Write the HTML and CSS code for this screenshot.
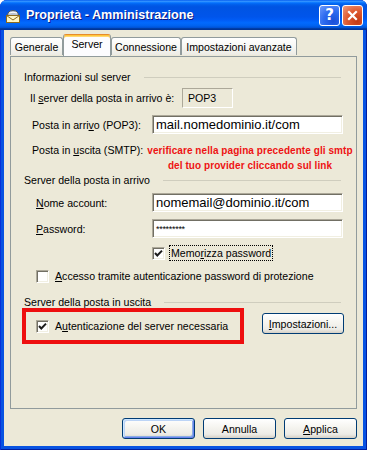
FILE: index.html
```html
<!DOCTYPE html>
<html lang="it">
<head>
<meta charset="utf-8">
<title>Proprietà - Amministrazione</title>
<link rel="stylesheet" href="styles.css">
</head>
<body>
<div class="window">
  <div class="titlebar">
    <svg class="ticon" width="16" height="16" viewBox="0 0 16 16">
      <path d="M2.5 8 Q2.5 2.5 8 2.5 Q13.5 2.5 13.5 8 Z" fill="#B9C2CF" stroke="#4E5866" stroke-width="1"/>
      <path d="M4 5 Q8 3.5 12 5" fill="none" stroke="#fff" stroke-width="1"/>
      <rect x="1.5" y="7.5" width="13" height="7" fill="#FFF6C4" stroke="#8C6B1E"/>
      <path d="M1.5 7.5 L8 12 L14.5 7.5" fill="none" stroke="#8C6B1E"/>
    </svg>
    <span class="title">Proprietà - Amministrazione</span>
    <div class="tbtns">
      <span class="tb help">?</span>
      <span class="tb close"><svg width="13" height="13" viewBox="0 0 13 13"><path d="M3 3 L10 10 M10 3 L3 10" stroke="#fff" stroke-width="2.2" stroke-linecap="square"/></svg></span>
    </div>
  </div>
  <div class="client">
    <div class="tabs">
      <div class="tab t-gen">Generale</div>
      <div class="tab sel t-srv">Server</div>
      <div class="tab t-con">Connessione</div>
      <div class="tab t-imp">Impostazioni avanzate</div>
    </div>
    <div class="panel">
      <div class="group"><span>Informazioni sul server</span><i class="rule"></i></div>
      <div class="row r-type">
        <span class="lbl lbl-type">Il <u>s</u>erver della posta in arrivo è:</span>
        <span class="static">POP3</span>
      </div>
      <div class="row r-in">
        <span class="lbl lbl-8">Posta in arri<u>v</u>o (POP3):</span>
        <div class="edit">mail.nomedominio.it/com</div>
      </div>
      <div class="row r-out">
        <span class="lbl lbl-out">Posta in <u>u</u>scita (SMTP):</span>
        <div class="note">verificare nella pagina precedente gli smtp<br>del tuo provider cliccando sul link</div>
      </div>
      <div class="group"><span>Server della posta in arrivo</span><i class="rule"></i></div>
      <div class="row r-acc">
        <span class="lbl lbl-12"><u>N</u>ome account:</span>
        <div class="edit">nomemail@dominio.it/com</div>
      </div>
      <div class="row r-pwd">
        <span class="lbl lbl-12"><u>P</u>assword:</span>
        <div class="edit pwd">*********</div>
      </div>
      <div class="row r-mem">
        <span class="cb checked"><svg width="11" height="11" viewBox="0 0 11 11"><path d="M2 5 L4.3 7.5 L9 2.6" fill="none" stroke="#1d1d1d" stroke-width="2"/></svg></span>
        <span class="cblbl focus">Memo<u>r</u>izza password</span>
      </div>
      <div class="row r-spa">
        <span class="cb"></span>
        <span class="cblbl"><u>A</u>ccesso tramite autenticazione password di protezione</span>
      </div>
      <div class="group g-out"><span>Server della posta in uscita</span><i class="rule"></i></div>
      <div class="row r-auth">
        <div class="highlight">
          <span class="cb checked"><svg width="11" height="11" viewBox="0 0 11 11"><path d="M2 5 L4.3 7.5 L9 2.6" fill="none" stroke="#1d1d1d" stroke-width="2"/></svg></span>
          <span class="cblbl">A<u>u</u>tenticazione del server necessaria</span>
        </div>
        <button class="btn btn-set"><u>I</u>mpostazioni...</button>
      </div>
    </div>
    <div class="buttons">
      <button class="btn default">OK</button>
      <button class="btn">Annulla</button>
      <button class="btn"><u>A</u>pplica</button>
    </div>
  </div>
</div>
</body>
</html>
```

FILE: styles.css
```css
* { box-sizing: border-box; }
body {
  margin: 0;
  font-family: "Liberation Sans", Arial, sans-serif;
  font-size: 10.6px;
  color: #000;
  background: #fff;
}
u { text-decoration: underline; text-underline-offset: 1px; }

.window {
  width: 367px;
  height: 450px;
  display: flex;
  flex-direction: column;
  background: #0853E2;
  box-shadow: inset 1px 0 0 #0831D9, inset -1px 0 0 #001EA0, inset 0 -1px 0 #001EA0;
  border-radius: 7px 7px 0 0;
  overflow: hidden;
}

.titlebar {
  height: 30px;
  flex: none;
  display: flex;
  align-items: center;
  padding: 0 4px 0 5px;
  background: linear-gradient(to bottom, #0058EE 0%, #3593FF 4%, #288EFF 6%, #127DFF 8%, #036FFC 10%, #0262EE 14%, #0057E5 20%, #0054E3 24%, #0055EB 56%, #005BF5 66%, #026AFE 76%, #0062EF 86%, #0052D6 92%, #0040AB 94%, #003092 100%);
}
.ticon { flex: none; margin-right: 5px; margin-top: 1px; }
.title {
  flex: 1;
  color: #fff;
  font-weight: bold;
  font-size: 12.6px;
  text-shadow: 1px 1px 0 #0A1883;
}
.tbtns { display: flex; gap: 2px; }
.tb {
  width: 21px;
  height: 21px;
  border: 1px solid #fff;
  border-radius: 3px;
  display: flex;
  align-items: center;
  justify-content: center;
  color: #fff;
}
.help {
  background: radial-gradient(circle at 70% 80%, #1A4FD8 0%, #2D6CF0 50%, #6E9BFB 100%);
  font-family: "DejaVu Sans", sans-serif;
  font-weight: bold;
  font-size: 15px;
}
.close {
  background: radial-gradient(circle at 75% 80%, #C23A14 0%, #DF5A30 50%, #EE9C80 100%);
}

.client {
  flex: 1;
  margin: 0 4px 4px;
  background: #ECE9D8;
  display: flex;
  flex-direction: column;
}

.tabs {
  height: 26px;
  flex: none;
  display: flex;
  align-items: flex-end;
  padding-left: 6px;
  position: relative;
  z-index: 1;
}
.tab {
  height: 18px;
  margin-bottom: 1px;
  border: 1px solid #919B9C;
  border-bottom: none;
  border-radius: 3px 3px 0 0;
  background: linear-gradient(to bottom, #FFFFFF 0%, #F7F7F4 50%, #ECEBE4 100%);
  display: flex;
  align-items: center;
  justify-content: center;
  white-space: nowrap;
  padding-top: 1px;
}
.tab.sel {
  height: 22px;
  margin-bottom: 0;
  background: #FCFCFE;
  border-top: 1px solid #E68B2C;
  box-shadow: inset 0 1px 0 #FFC73C, inset 0 2px 0 #FFD774;
  padding-top: 0;
  padding-bottom: 3px;
}
.t-gen { width: 53px; }
.t-srv { width: 48px; }
.t-con { width: 70px; }
.t-imp { width: 116px; }

.panel {
  height: 353px;
  flex: none;
  margin: 0 6px;
  border: 1px solid #919B9C;
  background: #ECE9D8;
  padding: 13px 13px 0 13px;
  display: flex;
  flex-direction: column;
}

.group {
  height: 14px;
  display: flex;
  align-items: center;
  white-space: nowrap;
}
.group .rule {
  flex: 1;
  height: 0;
  border-top: 1px solid #CFCDBE;
  margin: 1px 2px 0 13px;
}
.g-out { margin-top: 11px; height: 13px; }

.row {
  display: flex;
  align-items: center;
  white-space: nowrap;
}
.lbl { flex: none; }
.lbl-type { width: 158px; padding-left: 6px; }
.lbl-8 { width: 128px; padding-left: 8px; }
.lbl-12 { width: 128px; padding-left: 12px; }
.lbl-out { width: 123px; padding-left: 8px; align-self: flex-start; line-height: 15px; }

.r-type { margin-top: 4px; height: 20px; }
.static {
  width: 51px;
  height: 20px;
  border: 1px solid;
  border-color: #ACA899 #FFFFFF #FFFFFF #ACA899;
  padding-left: 5px;
  display: flex;
  align-items: center;
}

.edit {
  width: 191px;
  height: 19px;
  background: #fff;
  border: 1px solid;
  border-color: #ACA899 #FFFFFF #FFFFFF #ACA899;
  box-shadow: inset 1px 1px 0 #716F64, inset -1px -1px 0 #F1EFE2;
  font-size: 13px;
  padding-left: 3px;
  display: flex;
  align-items: center;
  overflow: hidden;
}
.edit.pwd { font-size: 9px; align-items: flex-start; padding-top: 4px; letter-spacing: -0.3px; }

.r-in { margin-top: 7px; height: 19px; }
.r-out { margin-top: 9px; height: 30px; align-items: flex-start; }
.note {
  width: 206px;
  flex: none;
  color: #EE1313;
  font-weight: bold;
  font-size: 10px;
  line-height: 15px;
  text-align: center;
  letter-spacing: 0.07px;
}
.r-acc { margin-top: 6px; height: 19px; }
.r-pwd { margin-top: 7px; height: 19px; }

.cb {
  flex: none;
  width: 13px;
  height: 13px;
  border: 1px solid;
  border-color: #ACA899 #FFFFFF #FFFFFF #ACA899;
  box-shadow: inset 1px 1px 0 #716F64, inset -1px -1px 0 #F1EFE2;
  background: #fff;
  display: flex;
  align-items: center;
  justify-content: center;
}
.cblbl { margin-left: 4px; padding: 0 1px; line-height: 14px; border: 1px solid transparent; }
.cblbl.focus { border: 1px dotted #000; }

.r-mem { margin-top: 7px; height: 16px; padding-left: 128px; }
.r-spa { margin-top: 7px; height: 16px; padding-left: 12px; }

.r-auth { align-items: flex-start; height: 36px; }
.highlight {
  width: 222px;
  height: 36px;
  margin-left: -2px;
  border: 4px solid #EE0F0F;
  display: flex;
  align-items: center;
  padding-left: 10px;
}

.btn {
  font-family: "Liberation Sans", Arial, sans-serif;
  font-size: 10.6px;
  color: #000;
  height: 21px;
  border: 1px solid #003C74;
  border-radius: 3px;
  background: linear-gradient(to bottom, #FFFFFF 0%, #F5F4EF 45%, #ECEBE6 80%, #D6D0C5 100%);
  padding: 0;
  margin: 0;
  display: flex;
  align-items: center;
  justify-content: center;
}
.btn-set { width: 82px; margin-left: auto; margin-top: 5px; margin-right: -1px; }
.btn.default { box-shadow: inset 1px 1px 0 #CEE7FF, inset -1px -1px 0 #6982EE, inset 2px 2px 0 #BCD4F6, inset -2px -2px 0 #89ADE4; }

.buttons {
  margin-top: 9px;
  display: flex;
  justify-content: flex-end;
  gap: 8px;
  padding-right: 6px;
}
.buttons .btn { width: 73px; }
```
